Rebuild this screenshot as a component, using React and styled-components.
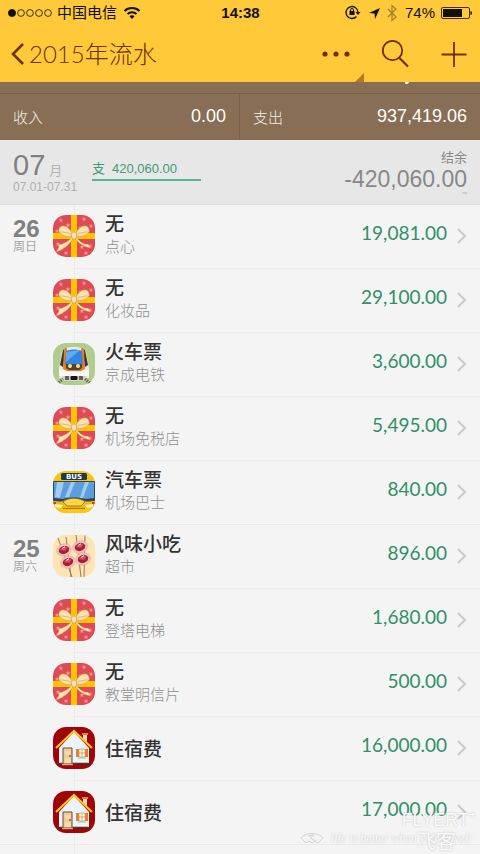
import styled, { createGlobalStyle } from 'styled-components';

const days = [
  {
    date: '26',
    week: '周日',
    records: [
      { icon: 'gift', title: '无', note: '点心', amount: '19,081.00' },
      { icon: 'gift', title: '无', note: '化妆品', amount: '29,100.00' },
      { icon: 'train', title: '火车票', note: '京成电铁', amount: '3,600.00' },
      { icon: 'gift', title: '无', note: '机场免税店', amount: '5,495.00' },
      { icon: 'bus', title: '汽车票', note: '机场巴士', amount: '840.00' },
    ],
  },
  {
    date: '25',
    week: '周六',
    records: [
      { icon: 'snack', title: '风味小吃', note: '超市', amount: '896.00' },
      { icon: 'gift', title: '无', note: '登塔电梯', amount: '1,680.00' },
      { icon: 'gift', title: '无', note: '教堂明信片', amount: '500.00' },
      { icon: 'house', title: '住宿费', amount: '16,000.00' },
      { icon: 'house', title: '住宿费', amount: '17,000.00' },
    ],
  },
];

const Gift = () => (
  <>
    <rect width="42" height="42" fill="#e04a57" />
    <g fill="#f49a94">
      {[[8, 5], [31, 4], [15, 10], [38, 11], [4, 16], [27, 13], [5, 29], [13, 29], [29, 32], [37, 31], [13, 38], [33, 38]].map(([x, y]) => (
        <path key={`${x}-${y}`} d={`M${x} ${y - 2}l.7 1.3 1.5.2-1.1 1 .3 1.5-1.4-.7-1.4.7.3-1.5-1.1-1 1.5-.2z`} />
      ))}
    </g>
    <path d="M18 0h6v42h-6zM0 18h42v6H0z" fill="#ffc400" />
    <g fill="#fbe3ae" stroke="#c98b4a" strokeWidth=".5" strokeLinejoin="round">
      <path d="M19 22C15 27 10 29 5 30l1 2-3 5c8-2 14-8 17-14z" />
      <path d="M23 22c3 4 8 8 12 7l3 4c-8-1-13-5-16-10z" />
      <path d="M19 21C13 23 4 19 6 14c2-6 10-3 13 4z" />
      <path d="M23 21c6 2 15-2 13-7-2-6-10-3-13 4z" />
      <path d="M18 19c-3-1-6-2-11-2M24 19c3-1 6-2 11-2" fill="none" />
      <rect x="18.500" y="17" width="5" height="7" rx="2.400" />
    </g>
  </>
);

const Train = () => (
  <>
    <rect width="42" height="42" fill="#b1cd8c" />
    <path d="M6 35V25L9 8c2-3 6-4 12-4s10 1 12 4l3 17v10z" fill="#eee9e6" />
    <path d="M7 22L10 7l3-2-3 19zM35 22L32 7l-3-2 3 19z" fill="#333" />
    <path d="M11 6l-1 20 4 2h14l4-2-1-20-3-1 1 17-2 3H15l-2-3 1-17z" fill="#f47b13" />
    <path d="M13 8c5-2 11-2 16 0l1 14H12z" fill="#3186e5" />
    <path d="M13 9l14-2-14 12z" fill="#65a9ef" />
    <path d="M13 21h16v4l-3 2H16l-3-2z" fill="#494344" />
    <circle cx="17" cy="23" r="2" fill="#ffe46c" />
    <circle cx="25" cy="23" r="2" fill="#ffe46c" />
    <path d="M6 27l5 0 4 2h12l4-2h5v6H6z" fill="#faf8f5" />
    <path d="M9 33h24v5H9z" fill="#d5d0cb" />
    <path d="M12 33h4v4h-4zM26 33h4v4h-4z" fill="#615e5c" />
    <rect x="17.500" y="33" width="7" height="4" rx="1" fill="#171717" />
    <path d="M4 41l6-5M32 36l6 5" stroke="#61644d" strokeWidth="3" strokeDasharray="1.400 1" />
  </>
);

const Bus = () => (
  <>
    <rect width="42" height="42" fill="#fcc30b" />
    <rect x="8" y="2" width="26" height="7" rx="1.500" fill="#20394c" />
    <text x="21" y="8" textAnchor="middle" fontFamily="DejaVu Sans" fontWeight="700" fontSize="7" fill="#fff">BUS</text>
    <path d="M0 10h42v20c-5 1-8 1-11 0-5-3-15-3-20 0-3 1-6 1-11 0z" fill="#31465c" />
    <path d="M1 11h40v16l-9 1c-6-2-16-2-22 0l-9-1z" fill="#5c9ddc" />
    <path d="M4 11h7L7 27l-5-1zM18 11h4l-6 15h-4zM32 11h4l-6 16h-3z" fill="#a3caef" />
    <path d="M0 30l9 1 4 4h16l4-4 9-1v12H0z" fill="#f7b900" />
    <path d="M10 31c5-5 17-5 22 0l-4 4H14z" fill="#ffd640" stroke="#5f6044" strokeWidth=".7" />
    <path d="M0 35l9 2h24l9-2v7H0z" fill="#ffc710" />
    <path d="M2 33l8 1-2 3-6-1zM40 33l-8 1 2 3 6-1z" fill="#fff4cc" />
    <path d="M0 31h3v2H0zM39 31h3v2h-3z" fill="#db3a20" />
    <path d="M10 37.500h22" stroke="#a76b12" />
  </>
);

const Snack = () => (
  <>
    <rect width="42" height="42" fill="#fde4b1" />
    <path d="M5 3l14 39M13 2l5 40M23 0l5 42M32 0l-1 42" stroke="#927c60" strokeWidth="1" />
    {[[11, 15], [27, 12], [15, 27], [30, 24]].map(([x, y]) => (
      <g key={x} transform={`translate(${x} ${y}) rotate(-18)`}>
        <ellipse rx="7.500" ry="6" fill="#edc5c2" stroke="#d9aaa6" strokeWidth=".6" />
        <ellipse rx="5.300" ry="4" fill="#a81f32" />
        <path d="M-4-1c3-3 6-2 8 0L1 1-2 0z" fill="#d84d59" />
        <path d="M-1-2l3-1" stroke="#fff" />
      </g>
    ))}
  </>
);

const House = () => (
  <>
    <rect width="42" height="42" fill="#9e0508" />
    <path d="M30 7h4v9l-4-4z" fill="#f3d4ba" />
    <path d="M29 6h6v2h-6z" fill="#e47a50" />
    <path d="M6 21L21 5l15 16v16H6z" fill="#eaf2fc" />
    <path d="M3 21L21 4l18 17" fill="none" stroke="#ffc413" strokeWidth="2.200" />
    <path d="M5 36.500h32" stroke="#53371c" strokeWidth="1.500" />
    <path d="M10 21h9v16h-9z" fill="#edcb92" stroke="#704a2a" />
    <path d="M12 24h5v4h-5zM12 31h5v5h-5z" fill="#f6dca9" />
    <circle cx="17" cy="29" r=".8" fill="#35221c" />
    <path d="M23 22h12v8H23z" fill="#ef7d24" />
    <path d="M26 22h6v8h-6z" fill="#fffbd8" stroke="#a9a58c" strokeWidth=".7" />
    <path d="M29 22v8M26 26h6M25 31h8" stroke="#a9a58c" strokeWidth=".8" />
    <path d="M9 37.500h11" stroke="#c8a7a1" strokeWidth="1.500" />
  </>
);

const drawings = { gift: Gift, train: Train, bus: Bus, snack: Snack, house: House };

const StatusIcons = () => (
  <svg width="54" height="18" viewBox="0 0 54 18" fill="none" aria-hidden="true">
    <path d="M11.500 12.500A6 6 0 1 1 13 8" stroke="#111" strokeWidth="1.300" />
    <path d="M10.500 8h5L13 11z" fill="#111" />
    <rect x="4.500" y="7" width="5" height="4" fill="#111" />
    <path d="M5.500 7V6a1.500 1.500 0 0 1 3 0v1" stroke="#111" />
    <path d="M35 4L24 9l5.500.500L30 15z" fill="#111" />
    <path d="M43 5l8 8-4 3.500v-15L51 5l-8 8" stroke="#a17e2d" strokeWidth="1.200" />
  </svg>
);

export default function App() {
  return (
    <Page>
      <GlobalStyle />
      <StatusBar>
        <Carrier>
          <svg width="46" height="10" viewBox="0 0 46 10" fill="none" stroke="#111" strokeWidth=".8">
            <circle cx="4" cy="5" r="3.600" fill="#111" />
            <circle cx="13" cy="5" r="3.400" />
            <circle cx="22" cy="5" r="3.400" />
            <circle cx="31" cy="5" r="3.400" />
            <circle cx="40" cy="5" r="3.400" />
          </svg>
          <span>中国电信</span>
          <Wifi width="18" height="14" viewBox="0 0 18 14" fill="none" stroke="#111" strokeWidth="2">
            <path d="M1.500 5c4-4 11-4 15 0M4.500 8c2.500-2.500 6.500-2.500 9 0" />
            <path d="M6.500 10.300c1.500-1.300 3.500-1.300 5 0L9 13z" fill="#111" stroke="none" />
          </Wifi>
        </Carrier>
        <Time>14:38</Time>
        <Power>
          <StatusIcons />
          <span>74%</span>
          <svg width="32" height="14" viewBox="0 0 32 14" aria-hidden="true">
            <rect x=".5" y="1.500" width="28" height="11" rx="1.500" fill="none" stroke="#3c300e" />
            <rect x="2" y="3" width="19" height="8" fill="#111" />
            <path d="M29.500 5c2 0 2 4 0 4z" fill="#111" />
          </svg>
        </Power>
      </StatusBar>

      <NavBar>
        <BackButton>
          <svg width="14" height="24" viewBox="0 0 14 24" fill="none" aria-hidden="true">
            <path d="M12 2L2 12l10 10" stroke="#6e3108" strokeWidth="2.600" />
          </svg>
          2015年流水
        </BackButton>
        <Actions>
          <IconButton aria-label="更多">
            <svg width="30" height="30" viewBox="0 0 30 30" fill="#6e3108">
              <circle cx="4" cy="15" r="2.600" />
              <circle cx="15" cy="15" r="2.600" />
              <circle cx="26" cy="15" r="2.600" />
            </svg>
          </IconButton>
          <IconButton aria-label="搜索">
            <svg width="30" height="30" viewBox="0 0 30 30" fill="none" stroke="#6e3108" strokeWidth="1.800">
              <circle cx="12.500" cy="11.500" r="9.700" />
              <path d="M19 18.500l9 9" strokeWidth="2.200" />
            </svg>
          </IconButton>
          <IconButton aria-label="添加">
            <svg width="30" height="30" viewBox="0 0 30 30" fill="none" stroke="#6e3108" strokeWidth="1.800">
              <path d="M15 3v25M2.500 15.500h25" />
            </svg>
          </IconButton>
        </Actions>
        <Corner />
      </NavBar>

      <Strip><StripMark /></Strip>
      <Summary>
        <Total><span>收入</span><strong>0.00</strong></Total>
        <Total><span>支出</span><strong>937,419.06</strong></Total>
      </Summary>

      <Month>
        <MonthName>
          <h2>07<small>月</small></h2>
          <p>07.01-07.31</p>
        </MonthName>
        <Spent><span>支</span>420,060.00</Spent>
        <Balance>
          <span>结余</span>
          <strong>-420,060.00</strong>
          <Dash />
        </Balance>
      </Month>

      <Days>
        {days.map((day) => (
          <Day key={day.date}>
            <DayLabel>
              <strong>{day.date}</strong>
              <span>{day.week}</span>
            </DayLabel>
            <Records>
              {day.records.map((record, i) => (
                <Record key={i} {...record} />
              ))}
            </Records>
          </Day>
        ))}
      </Days>

      <Watermark>
        <Slogan>
          <svg width="24" height="12" viewBox="0 0 24 12" fill="none" stroke="#d2d2d2" aria-hidden="true">
            <path d="M1 6c5-6 17-6 22 0l-5 5-3-2-3 2-3-2-3 2zM8 4l6-1-4 3 6 3" />
          </svg>
          life is better when you travel!
        </Slogan>
        <Brand>FLYERT<sup>+</sup></Brand>
        <BrandName>飞客</BrandName>
      </Watermark>
    </Page>
  );
}

function Record({ icon, title, note, amount }) {
  const Drawing = drawings[icon];
  return (
    <Row>
      <RowButton>
        <Category viewBox="0 0 42 42" aria-hidden="true"><Drawing /></Category>
        <Texts>
          <Title>{title}</Title>
          {note && <Note>{note}</Note>}
        </Texts>
        <Amount>{amount}</Amount>
        <svg width="10" height="16" viewBox="0 0 10 16" fill="none" aria-hidden="true">
          <path d="M1 1l7 7-7 7" stroke="#c6c6c6" strokeWidth="1.800" />
        </svg>
      </RowButton>
    </Row>
  );
}

const GlobalStyle = createGlobalStyle`
  * {
    box-sizing: border-box;
  }

  body {
    margin: 0;
    background: #f4f4f4;
    font-family: "Liberation Sans", "Noto Sans CJK SC", sans-serif;
  }

  h2, p, ul {
    margin: 0;
    padding: 0;
  }

  button {
    border: 0;
    padding: 0;
    background: none;
    font: inherit;
    color: inherit;
    cursor: pointer;
  }

  svg {
    display: block;
    flex: none;
  }
`;

const Page = styled.div`
  position: relative;
  display: flex;
  flex-direction: column;
  min-height: 100vh;
`;

const StatusBar = styled.div`
  display: grid;
  grid-template-columns: 1fr auto 1fr;
  align-items: center;
  height: 26px;
  padding: 0 7px 0 8px;
  background: #ffc93a;
  color: #111;
  font-size: 15px;
  line-height: 26px;
`;

const Carrier = styled.div`
  display: flex;
  align-items: center;
  gap: 3px;
`;

const Wifi = styled.svg`
  margin-left: 3px;
`;

const Time = styled.strong`
  color: #111;
`;

const Power = styled.div`
  display: flex;
  align-items: center;
  justify-content: flex-end;
  gap: 6px;
`;

const NavBar = styled.header`
  position: relative;
  display: flex;
  align-items: center;
  justify-content: space-between;
  height: 56px;
  padding: 0 11px;
  background: #ffc93a;
`;

const BackButton = styled.button`
  display: flex;
  align-items: center;
  gap: 4px;
  color: #6e3108;
  font-family: Lato, "Noto Sans CJK SC", sans-serif;
  font-size: 24px;
  font-weight: 300;
  line-height: 36px;
`;

const Actions = styled.div`
  display: flex;
  gap: 29px;
`;

const IconButton = styled.button`
  width: 30px;
  height: 30px;
`;

const Corner = styled.i`
  position: absolute;
  right: 116px;
  bottom: 0;
  border-left: 9px solid transparent;
  border-bottom: 9px solid #b8791c;
`;

const Strip = styled.div`
  position: relative;
  height: 12px;
  overflow: hidden;
  background: #876e54;
  border-bottom: 1px solid #7b6148;
`;

const StripMark = styled.i`
  position: absolute;
  top: -1px;
  right: 71px;
  width: 4px;
  height: 3px;
  border-radius: 0 0 3px 2px;
  background: #fff;
`;

const Summary = styled.section`
  display: grid;
  grid-template-columns: 1fr 1fr;
  height: 46px;
  background: #876e54;
  color: #f4efe9;
`;

const Total = styled.div`
  display: flex;
  align-items: center;
  justify-content: space-between;
  padding: 0 13px 2px;
  font-size: 15px;
  font-weight: 300;

  &:first-child {
    border-right: 1px solid #7b6148;
  }

  strong {
    font-size: 18px;
    font-weight: 400;
    color: #fff;
  }
`;

const Month = styled.section`
  display: flex;
  height: 65px;
  padding: 0 13px;
  background: #e7e7e7;
  border-bottom: 1px solid #dcdcdc;
`;

const MonthName = styled.div`
  width: 79px;
  padding-top: 10px;

  h2 {
    display: flex;
    align-items: baseline;
    height: 30px;
    color: #808080;
    font-size: 29px;
    font-weight: 400;
    line-height: 30px;
  }

  small {
    margin-left: 4px;
    color: #b5b5b5;
    font-size: 13px;
    line-height: 16px;
  }

  p {
    color: #b0b0b0;
    font-size: 12px;
    line-height: 14px;
  }
`;

const Spent = styled.div`
  align-self: flex-start;
  width: 109px;
  margin-top: 19px;
  border-bottom: 2px solid #5cb293;
  color: #409c78;
  font-size: 13px;
  line-height: 20px;

  span {
    margin-right: 7px;
  }
`;

const Balance = styled.div`
  display: flex;
  flex: 1;
  flex-direction: column;
  align-items: flex-end;
  padding-top: 10px;
  color: #888;
  font-size: 13px;
  line-height: 16px;

  strong {
    font-size: 23px;
    font-weight: 400;
    line-height: 26px;
  }
`;

const Dash = styled.i`
  width: 5px;
  height: 2px;
  background: #cfcfcf;
`;

const Days = styled.main`
  flex: 1;
  background: #f4f4f4 linear-gradient(#ebebeb, #ebebeb) 74px 0 / 1px 100% no-repeat;
`;

const Day = styled.section`
  display: flex;
  border-bottom: 1px solid #e9e9e9;
`;

const DayLabel = styled.div`
  display: flex;
  flex-direction: column;
  width: 53px;
  padding: 12px 0 0 13px;
  color: #808080;

  strong {
    font-size: 24px;
    line-height: 24px;
  }

  span {
    font-size: 12px;
    font-weight: 300;
    line-height: 12px;
  }
`;

const Records = styled.ul`
  flex: 1;
  list-style: none;
`;

const Row = styled.li`
  height: 64px;
  background: linear-gradient(#ebebeb, #ebebeb) 22px 100% / 100% 1px no-repeat;

  &:last-child {
    height: 63px;
    background: none;
  }
`;

const RowButton = styled.button`
  display: flex;
  align-items: center;
  width: 100%;
  height: 62px;
  padding-right: 13px;
  text-align: left;
`;

const Category = styled.svg`
  width: 42px;
  height: 42px;
  border-radius: 13px;
`;

const Texts = styled.span`
  display: flex;
  flex: 1;
  flex-direction: column;
  padding: 0 0 4px 10px;
  font-family: "Noto Sans CJK SC", sans-serif;
`;

const Title = styled.span`
  color: #333;
  font-size: 19px;
  font-weight: 500;
  line-height: 24px;

  /* a title without a note stands in the middle of the row */
  &:only-child {
    padding-top: 4px;
  }
`;

const Note = styled.span`
  color: #909090;
  font-size: 15px;
  font-weight: 300;
  line-height: 22px;
`;

const Amount = styled.span`
  margin-right: 10px;
  padding-bottom: 6px;
  color: #2f9068;
  font-family: Lato, sans-serif;
  font-size: 19px;
  line-height: 24px;
`;

const Watermark = styled.div`
  position: absolute;
  right: 4px;
  bottom: 0;
  width: 180px;
  height: 44px;
  color: #fafafa;
  text-shadow: 0 0 2px #bbb;
  pointer-events: none;
`;

const Brand = styled.span`
  position: absolute;
  top: 0;
  right: 0;
  font-size: 18px;
  line-height: 20px;

  sup {
    font-size: 12px;
    line-height: 0;
  }
`;

const BrandName = styled.span`
  position: absolute;
  right: 20px;
  bottom: 0;
  font-size: 20px;
  line-height: 24px;
`;

const Slogan = styled.span`
  position: absolute;
  right: 4px;
  bottom: 8px;
  display: flex;
  align-items: center;
  gap: 7px;
  font-family: "Liberation Serif", serif;
  font-size: 12px;
  font-style: italic;
  line-height: 16px;
  white-space: nowrap;
`;
